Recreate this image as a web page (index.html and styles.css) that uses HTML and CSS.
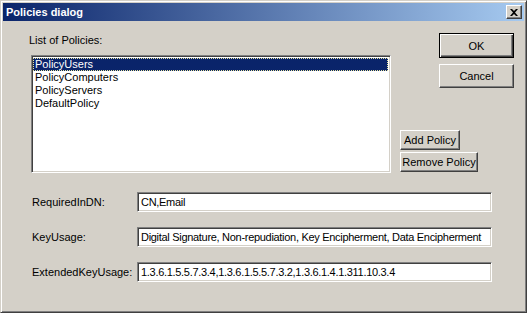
FILE: index.html
```html
<!DOCTYPE html>
<html>
<head>
  <title>Policies dialog</title>
  <link rel="stylesheet" href="styles.css">
</head>
<body>
  <div class="window">
    <div class="titlebar">
      <span class="title">Policies dialog</span>
      <button class="close-btn">
        <svg viewBox="0 0 8 7" width="8" height="7" xmlns="http://www.w3.org/2000/svg">
          <path d="M0 0h2l2 2 2-2h2L5 3.5 8 7H6L4 5 2 7H0l3-3.5z" fill="black"/>
        </svg>
      </button>
    </div>

    <div class="dialog-body">
      <div class="top">
        <div class="list-col">
          <div class="label list-label">List of Policies:</div>
          <div class="listbox">
            <div class="list-item selected">PolicyUsers</div>
            <div class="list-item">PolicyComputers</div>
            <div class="list-item">PolicyServers</div>
            <div class="list-item">DefaultPolicy</div>
          </div>
        </div>
        <div class="button-col">
          <div class="main-buttons">
            <button class="btn btn-default">OK</button>
            <button class="btn btn-cancel">Cancel</button>
          </div>
          <div class="policy-buttons">
            <button class="btn btn-add">Add Policy</button>
            <button class="btn btn-remove">Remove Policy</button>
          </div>
        </div>
      </div>

      <div class="fields">
        <div class="label">RequiredInDN:</div>
        <div class="textbox">CN,Email</div>
        <div class="label">KeyUsage:</div>
        <div class="textbox">Digital Signature, Non-repudiation, Key Encipherment, Data Encipherment</div>
        <div class="label">ExtendedKeyUsage:</div>
        <div class="textbox">1.3.6.1.5.5.7.3.4,1.3.6.1.5.5.7.3.2,1.3.6.1.4.1.311.10.3.4</div>
      </div>
    </div>
  </div>
</body>
</html>
```

FILE: styles.css
```css
html, body {
  margin: 0;
  padding: 0;
}
body {
  font-family: "Liberation Sans", Arial, sans-serif;
  font-size: 11px;
  color: #000;
  background-color: #d4d0c8;
}
.window {
  box-sizing: border-box;
  width: 527px;
  height: 313px;
  background-color: #d4d0c8;
  border: 1px solid;
  border-color: #d4d0c8 #404040 #404040 #d4d0c8;
  box-shadow: inset 1px 1px #fff, inset -1px -1px #808080;
  padding: 2px;
  display: flex;
  flex-direction: column;
}
.titlebar {
  height: 18px;
  display: flex;
  align-items: center;
  justify-content: space-between;
  background: linear-gradient(to right, #0a246a, #a6caf0);
  padding: 0 2px 0 3px;
}
.title {
  color: white;
  font-weight: bold;
  font-size: 11px;
}
.close-btn {
  box-sizing: border-box;
  width: 16px;
  height: 14px;
  padding: 0;
  display: flex;
  align-items: center;
  justify-content: center;
  background-color: #d4d0c8;
  border: 1px solid;
  border-color: #fff #404040 #404040 #fff;
  box-shadow: inset -1px -1px #808080;
}
.dialog-body {
  padding: 0 0 0 26px;
}
.top {
  display: flex;
  gap: 9px;
  padding-top: 12px;
}
.list-col {
  width: 362px;
}
.label {
  line-height: 13px;
}
.list-label {
  margin-top: 1px;
}
.listbox {
  box-sizing: border-box;
  width: 360px;
  height: 118px;
  margin: 8px 0 0 2px;
  background-color: white;
  border: 1px solid;
  border-color: #808080 #fff #fff #808080;
  box-shadow: inset 1px 1px #404040, inset -1px -1px #d4d0c8;
  padding: 2px 2px 0 1px;
}
.list-item {
  height: 13px;
  line-height: 13px;
  padding-left: 2px;
  white-space: nowrap;
}
.list-item.selected {
  background-color: #0a246a;
  color: white;
  outline: 1px dotted #e8e4a0;
  outline-offset: -1px;
}
.button-col {
  width: 114px;
  display: flex;
  flex-direction: column;
  justify-content: space-between;
  padding-bottom: 1px;
}
.main-buttons {
  display: flex;
  flex-direction: column;
  align-items: flex-end;
  gap: 6px;
}
.policy-buttons {
  display: flex;
  flex-direction: column;
  align-items: flex-start;
  gap: 2px;
}
.btn {
  box-sizing: border-box;
  font-family: "Liberation Sans", Arial, sans-serif;
  font-size: 11px;
  color: #000;
  background-color: #d4d0c8;
  padding: 0;
  border: 1px solid;
  border-color: #fff #404040 #404040 #fff;
  box-shadow: inset -1px -1px #808080;
}
.btn-default {
  width: 75px;
  height: 25px;
  border-color: #000;
  box-shadow: inset 1px 1px #fff, inset -1px -1px #404040, inset -2px -2px #808080;
}
.btn-cancel {
  width: 75px;
  height: 24px;
}
.btn-add {
  width: 60px;
  height: 20px;
}
.btn-remove {
  width: 78px;
  height: 20px;
}
.fields {
  display: grid;
  grid-template-columns: 105px 355px;
  row-gap: 15px;
  align-items: center;
  margin: 19px 0 0 3px;
}
.textbox {
  box-sizing: border-box;
  height: 20px;
  line-height: 16px;
  background-color: white;
  border: 1px solid;
  border-color: #808080 #fff #fff #808080;
  box-shadow: inset 1px 1px #404040, inset -1px -1px #d4d0c8;
  padding: 1px 2px 0 3px;
  white-space: nowrap;
  overflow: hidden;
  letter-spacing: -0.3px;
}
```
